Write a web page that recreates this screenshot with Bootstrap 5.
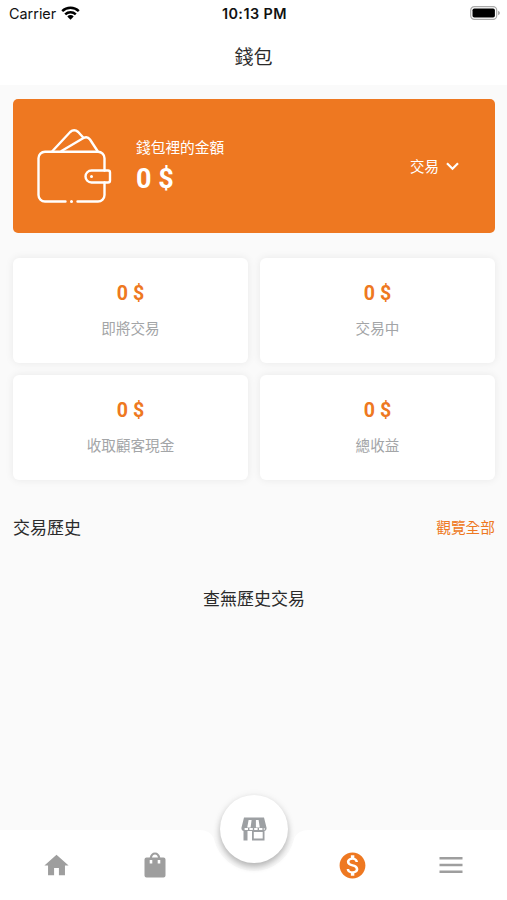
<!DOCTYPE html>
<html lang="zh-Hant">
<head>
<meta charset="utf-8">
<meta name="viewport" content="width=device-width, initial-scale=1">
<title>錢包</title>
<link href="https://cdn.jsdelivr.net/npm/bootstrap@5.3.0/dist/css/bootstrap.min.css" rel="stylesheet">
<style>
  :root { --brand: #ee7821; }
  body { font-family: Roboto, "Noto Sans CJK TC", sans-serif; background: #fafafa; color: #2b2b2b; }
  svg { display: block; flex: none; }
  .app { height: 900px; overflow: hidden; }
  .top { height: 85px; }
  .status { height: 28px; padding: 0 7px 0 9px; font: 400 14.4px/28px Inter, sans-serif; color: #111; grid-template-columns: 1fr auto 1fr; }
  .status svg { margin-bottom: 2px; }
  .status-time { font-size: 14.4px; font-weight: 600; letter-spacing: .45px; }
  .page-title { font-size: 19px; line-height: 28px; margin-top: 16px; }
  .content { padding: 14px 12px 0 13px; }
  .wallet { height: 134px; background: var(--brand); border-radius: 5px; padding: 0 36px 0 24px; }
  .wallet-text { margin-left: 24px; }
  .wallet-label { font-size: 14.7px; line-height: 22px; }
  .wallet-sum { font-size: 27px; line-height: 32px; font-weight: 700; margin-top: 4px; }
  .wallet-menu { font-size: 14.5px; gap: 7px; padding-top: 3px; }
  .wallet-menu svg { margin-top: -3px; }
  .stats { gap: 12px; margin-top: 25px; grid-template-columns: 1fr 1fr; }
  .stat { height: 105px; background: #fff; border-radius: 6px; box-shadow: 0 0 8px rgba(0,0,0,.075); padding-top: 23px; }
  .stat-value { color: var(--brand); font-size: 19.6px; line-height: 26px; font-weight: 700; }
  .stat-label { color: #a3a5a7; font-size: 14.6px; line-height: 22px; margin-top: 11px; }
  .history { margin-top: 35px; font-size: 17px; line-height: 26px; }
  .see-all { color: var(--brand); font-size: 14.7px; }
  .empty { font-size: 17px; line-height: 26px; margin-top: 45px; }
  .tabs { height: 105px; }
  .tabs-shape { inset: 0; }
  .tab-row { height: 70px; margin-top: 35px; padding: 0 7px; }
  .tab-row > * { width: 98.6px; }
  .shop { left: 220px; top: 0; width: 68px; height: 68px; border-radius: 50%; background: #fff; box-shadow: 0 4px 6px rgba(0,0,0,.24), 0 1px 8px rgba(0,0,0,.08); }
</style>
<script src="https://cdn.jsdelivr.net/npm/bootstrap@5.3.0/dist/js/bootstrap.bundle.min.js"></script>
</head>
<body>
<div class="app d-flex flex-column">
  <header class="top bg-white">
    <div class="status d-grid align-items-center">
      <div class="d-flex align-items-center">
        <span>Carrier</span>
        <svg class="ms-1" width="21" height="16" viewBox="0 0 21 16" fill="none" stroke="#000" stroke-width="2.5"><path d="M2.200 6.100a12 12 0 0 1 16.600 0M5.200 9.300a7.700 7.700 0 0 1 10.600 0"/><path d="M10.500 14.700 7.300 11.400a4.600 4.600 0 0 1 6.400 0Z" fill="#000" stroke="none"/></svg>
      </div>
      <span class="status-time">10:13 PM</span>
      <svg class="ms-auto" width="30" height="14" viewBox="0 0 30 14"><rect x=".7" y=".7" width="26" height="12.6" rx="3.6" fill="#fff" stroke="#aaa" stroke-width="1.2"/><rect x="2.5" y="2.5" width="22.4" height="9" rx="1.8"/><path d="M28 4.800q2 .7 2 2.200t-2 2.200Z" fill="#aaa"/></svg>
    </div>
    <h1 class="page-title fw-normal text-center mb-0">錢包</h1>
  </header>

  <main class="content flex-grow-1">
    <section class="wallet d-flex align-items-center text-white">
      <svg width="75" height="76" viewBox="37 128 75 76" fill="none" stroke="#fff" stroke-width="2.4" stroke-linecap="round" stroke-linejoin="round">
        <path d="M65.500 201.500H45a6.500 6.500 0 0 1-6.500-6.500V158.200a6.500 6.500 0 0 1 6.500-6.500H98a6.500 6.500 0 0 1 6.500 6.500V170.500M104.500 182.500v12.500a6.500 6.500 0 0 1-6.500 6.500H77.500"/>
        <path d="M91.500 170.500H108q2 0 2 2v8q0 2-2 2H91.500a6 6 0 0 1 0-12Z"/>
        <path d="M52.500 151 70.200 132q4-3.700 8 0l4.800 5.200M61.500 151 83.500 138q4-2 6.500 1.500L97.500 151"/>
        <path d="M91.500 176.400h.01M71.500 201.500h.01" stroke-width="3"/>
      </svg>
      <div class="wallet-text">
        <div class="wallet-label">錢包裡的金額</div>
        <div class="wallet-sum">0 $</div>
      </div>
      <div class="wallet-menu ms-auto d-flex align-items-center">交易
        <svg width="13" height="9" viewBox="0 0 13 9" fill="none" stroke="#fff" stroke-width="2.2"><path d="m1 1.300 5.500 5.500L12 1.300"/></svg>
      </div>
    </section>

    <section class="stats d-grid text-center">
      <div class="stat"><div class="stat-value">0 $</div><div class="stat-label">即將交易</div></div>
      <div class="stat"><div class="stat-value">0 $</div><div class="stat-label">交易中</div></div>
      <div class="stat"><div class="stat-value">0 $</div><div class="stat-label">收取顧客現金</div></div>
      <div class="stat"><div class="stat-value">0 $</div><div class="stat-label">總收益</div></div>
    </section>

    <div class="history d-flex justify-content-between align-items-center">
      <span>交易歷史</span><span class="see-all">觀覽全部</span>
    </div>
    <p class="empty text-center mb-0">查無歷史交易</p>
  </main>

  <nav class="tabs position-relative">
    <svg class="tabs-shape position-absolute" width="507" height="105" viewBox="0 0 507 105"><path fill="#fff" d="M0 35H199Q211 35 214 44A41 41 0 0 0 294 44Q297 35 309 35H507V105H0Z"/></svg>
    <div class="shop position-absolute d-flex align-items-center justify-content-center">
      <svg width="26" height="24" viewBox="0 0 26 24" fill="#9da0a3"><path fill-rule="evenodd" d="M3 .5H23L25.600 11Q25.500 14 23 14H3Q.5 14 .4 11ZM7.600 3 6.200 10.500H9.600L10.600 3ZM14.900 3V10.500H18.800L17.600 3Z"/><path d="M2.500 12H6.500V23.500H2.500ZM11 13H23.500V23.500H11ZM12.800 15V21.600H21.700V15Z" fill-rule="evenodd"/><path d="M3.600 12h20" fill="none" stroke="#fff" stroke-width="2" stroke-dasharray="3.400 1.400"/></svg>
    </div>
    <div class="tab-row position-relative d-flex justify-content-between align-items-center">
      <a class="d-flex justify-content-center"><svg width="29" height="29" viewBox="0 0 24 24" fill="#9e9e9e"><path d="M10 20v-6h4v6h5v-8h3L12 3 2 12h3v8z"/></svg></a>
      <a class="d-flex justify-content-center"><svg width="22" height="26" viewBox="0 0 22 26" fill="#9e9e9e"><path fill-rule="evenodd" d="M2.500 5.500H5.700C6.300 2.500 8.200.5 11 .5s4.700 2 5.300 5h3.200q2 0 2 2V23.500q0 2-2 2h-17q-2 0-2-2V7.500q0-2 2-2ZM8 5.500h6C13.600 3.600 12.500 2.600 11 2.600S8.400 3.600 8 5.500ZM5.700 8v3.500h2.600V8ZM13.700 8v3.500h2.600V8Z"/></svg></a>
      <span></span>
      <a class="d-flex justify-content-center"><svg width="31" height="31" viewBox="0 0 24 24" fill="#ee7821"><path d="M12 2C6.480 2 2 6.480 2 12s4.480 10 10 10 10-4.480 10-10S17.520 2 12 2zm1.410 16.090V20h-2.670v-1.930c-1.710-.36-3.160-1.460-3.270-3.400h1.960c.1 1.050.82 1.870 2.650 1.870 1.960 0 2.400-.98 2.400-1.590 0-.83-.44-1.610-2.670-2.140-2.480-.6-4.180-1.620-4.180-3.670 0-1.720 1.390-2.840 3.110-3.210V4h2.670v1.950c1.860.45 2.790 1.860 2.850 3.390H14.300c-.05-1.110-.64-1.870-2.220-1.870-1.500 0-2.400.68-2.400 1.640 0 .84.65 1.390 2.670 1.910s4.180 1.390 4.180 3.910c-.01 1.830-1.380 2.830-3.120 3.160z"/></svg></a>
      <a class="d-flex justify-content-center"><svg width="24" height="16" viewBox="0 0 24 16" fill="#9e9e9e"><path d="M.5 0h23v2.600H.5ZM.5 6.700h23v2.600H.5ZM.5 13.400h23V16H.5Z"/></svg></a>
    </div>
  </nav>
</div>
</body>
</html>
